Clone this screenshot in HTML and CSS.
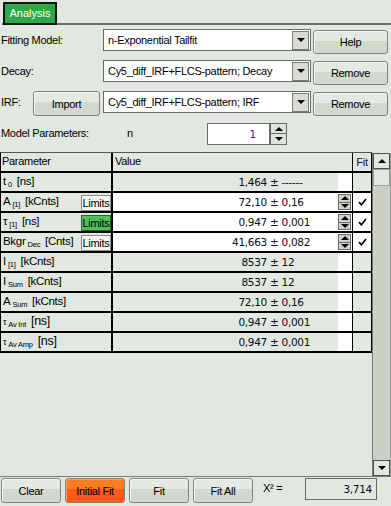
FILE: index.html
```html
<!DOCTYPE html>
<html lang="en">

<head>
    <meta charset="UTF-8">
    <meta name="viewport" content="width=device-width, initial-scale=1.0">
    <title>Analysis</title>
    <link rel="stylesheet" href="styles.css">
</head>

<body>
    <div class="tabs">
        <div class="tab">Analysis</div>
    </div>

    <div class="pane">
        <div class="form-row">
            <div class="lbl">Fitting Model:</div>
            <div class="combo"><span class="combo-text">n-Exponential Tailfit</span><span class="drop"></span></div>
            <button class="btn side-btn">Help</button>
        </div>
        <div class="form-row">
            <div class="lbl">Decay:</div>
            <div class="combo"><span class="combo-text">Cy5_diff_IRF+FLCS-pattern; Decay</span><span class="drop"></span></div>
            <button class="btn side-btn">Remove</button>
        </div>
        <div class="form-row">
            <div class="lbl lbl-short">IRF:</div>
            <button class="btn import-btn">Import</button>
            <div class="combo"><span class="combo-text">Cy5_diff_IRF+FLCS-pattern; IRF</span><span class="drop"></span></div>
            <button class="btn side-btn">Remove</button>
        </div>
        <div class="param-row">
            <div class="lbl lbl-model">Model Parameters:</div>
            <div class="n-lbl">n</div>
            <div class="spinbox">1</div>
            <div class="spin-arrows">
                <span class="arr"><i class="tri-up"></i></span>
                <span class="arr"><i class="tri-down"></i></span>
            </div>
        </div>
    </div>

    <div class="grid-area">
        <div class="ptable">
            <div class="prow head">
                <div class="c-param">Parameter</div>
                <div class="h-val">Value</div>
                <div class="c-fit h-fit">Fit</div>
            </div>

            <div class="prow">
                <div class="c-param"><span class="pname">t<sub>0</sub> [ns]</span></div>
                <div class="c-val"><span class="num">1,464</span><span class="err">&nbsp;± ------</span></div>
                <div class="c-spin"></div>
                <div class="c-fit"></div>
            </div>

            <div class="prow edit">
                <div class="c-param"><span class="pname">A<sub>[1]</sub> [kCnts]</span><button class="limits">Limits</button></div>
                <div class="c-val"><span class="num">72,10</span><span class="err">&nbsp;± 0,16</span></div>
                <div class="c-spin"><span class="sp"><i class="tri-up"></i></span><span class="sp"><i class="tri-down"></i></span></div>
                <div class="c-fit"><svg width="9" height="8" viewBox="0 0 9 8"><path d="M1 4.2 L3.4 6.8 L8 1" fill="none" stroke="#000" stroke-width="1.7"/></svg></div>
            </div>

            <div class="prow edit">
                <div class="c-param"><span class="pname">τ<sub>[1]</sub> [ns]</span><button class="limits on">Limits</button></div>
                <div class="c-val"><span class="num">0,947</span><span class="err">&nbsp;± 0,001</span></div>
                <div class="c-spin"><span class="sp"><i class="tri-up"></i></span><span class="sp"><i class="tri-down"></i></span></div>
                <div class="c-fit"><svg width="9" height="8" viewBox="0 0 9 8"><path d="M1 4.2 L3.4 6.8 L8 1" fill="none" stroke="#000" stroke-width="1.7"/></svg></div>
            </div>

            <div class="prow edit">
                <div class="c-param"><span class="pname">Bkgr<sub>Dec</sub> [Cnts]</span><button class="limits">Limits</button></div>
                <div class="c-val"><span class="num">41,663</span><span class="err">&nbsp;± 0,082</span></div>
                <div class="c-spin"><span class="sp"><i class="tri-up"></i></span><span class="sp"><i class="tri-down"></i></span></div>
                <div class="c-fit"><svg width="9" height="8" viewBox="0 0 9 8"><path d="M1 4.2 L3.4 6.8 L8 1" fill="none" stroke="#000" stroke-width="1.7"/></svg></div>
            </div>

            <div class="prow">
                <div class="c-param"><span class="pname">I<sub>[1]</sub> [kCnts]</span></div>
                <div class="c-val"><span class="num">8537</span><span class="err">&nbsp;± 12</span></div>
                <div class="c-spin"></div>
                <div class="c-fit"></div>
            </div>

            <div class="prow">
                <div class="c-param"><span class="pname">I<sub>Sum</sub> [kCnts]</span></div>
                <div class="c-val"><span class="num">8537</span><span class="err">&nbsp;± 12</span></div>
                <div class="c-spin"></div>
                <div class="c-fit"></div>
            </div>

            <div class="prow">
                <div class="c-param"><span class="pname">A<sub>Sum</sub> [kCnts]</span></div>
                <div class="c-val"><span class="num">72,10</span><span class="err">&nbsp;± 0,16</span></div>
                <div class="c-spin"></div>
                <div class="c-fit"></div>
            </div>

            <div class="prow">
                <div class="c-param"><span class="pname"><span class="small-tau">τ</span><sub>Av Int</sub> <span class="big">[ns]</span></span></div>
                <div class="c-val"><span class="num">0,947</span><span class="err">&nbsp;± 0,001</span></div>
                <div class="c-spin"></div>
                <div class="c-fit"></div>
            </div>

            <div class="prow">
                <div class="c-param"><span class="pname"><span class="small-tau">τ</span><sub>Av Amp</sub> <span class="big">[ns]</span></span></div>
                <div class="c-val"><span class="num">0,947</span><span class="err">&nbsp;± 0,001</span></div>
                <div class="c-spin"></div>
                <div class="c-fit"></div>
            </div>
        </div>

        <div class="scrollbar">
            <div class="sb-btn"><i class="tri-up"></i></div>
            <div class="sb-thumb"></div>
            <div class="sb-track"></div>
            <div class="sb-btn"><i class="tri-down"></i></div>
        </div>
    </div>

    <div class="bottom-bar">
        <button class="btn bb-btn">Clear</button>
        <button class="btn bb-btn orange">Initial Fit</button>
        <button class="btn bb-btn">Fit</button>
        <button class="btn bb-btn">Fit All</button>
        <span class="chi">X² =</span>
        <div class="chi-val">3,714</div>
    </div>
</body>

</html>
```

FILE: styles.css
```css
* {
    margin: 0;
    padding: 0;
    box-sizing: border-box;
}

body {
    width: 391px;
    height: 506px;
    overflow: hidden;
    background: #e0e8df;
    font-family: 'Liberation Sans', Arial, sans-serif;
    font-size: 11px;
    letter-spacing: -0.3px;
    color: #000;
}

/* tab strip */
.tabs {
    height: 25px;
    margin-left: 2px;
    padding: 2px 0 0 1px;
    border-bottom: 2px solid #6e6e6e;
}

.tab {
    width: 54px;
    height: 23px;
    background: #2ba84a;
    border: 2px solid #141414;
    color: #fff;
    font-size: 11px;
    letter-spacing: 0;
    line-height: 18px;
    text-align: center;
}

.pane {
    padding: 4px 0 0 1px;
}

.form-row {
    display: flex;
    align-items: flex-start;
    height: 25px;
    margin-bottom: 6px;
}

.lbl {
    width: 102px;
    line-height: 22px;
}

.lbl-short {
    width: 32px;
}

.lbl-model {
    width: 126px;
}

.combo {
    display: flex;
    align-items: center;
    width: 208px;
    height: 22px;
    background: #fff;
    border: 1px solid #6a6a6a;
    padding: 0 1px 0 4px;
}

.combo-text {
    flex: 1;
    white-space: nowrap;
    overflow: hidden;
}

.drop {
    width: 17px;
    height: 19px;
    border: 1px solid #7a7a7a;
    background: #d6ded4;
    display: flex;
    align-items: center;
    justify-content: center;
}

.drop::after {
    content: "";
    border-left: 4px solid transparent;
    border-right: 4px solid transparent;
    border-top: 4px solid #000;
}

.btn {
    font-family: inherit;
    font-size: 11px;
    letter-spacing: -0.3px;
    color: #000;
    border: 1px solid #828282;
    border-radius: 3px;
    background: linear-gradient(#e3eae1 0%, #e3eae1 45%, #d1d9cf 45%, #d1d9cf 100%);
    box-shadow: inset 1px 1px 0 #f6f9f4;
}

.side-btn {
    width: 75px;
    height: 24px;
    margin: 1px 0 0 2px;
}

.import-btn {
    width: 67px;
    height: 25px;
    margin-right: 3px;
}

.param-row {
    display: flex;
    align-items: flex-start;
    height: 24px;
    margin-bottom: 6px;
}

.n-lbl {
    width: 80px;
    line-height: 22px;
}

.spinbox {
    width: 63px;
    height: 22px;
    margin-top: 1px;
    background: #fff;
    border: 1px solid #6a6a6a;
    text-align: right;
    padding-right: 13px;
    line-height: 20px;
    font-family: 'DejaVu Sans', sans-serif;
    font-size: 10.5px;
    color: #5c1a5c;
}

.spin-arrows {
    display: flex;
    flex-direction: column;
    width: 17px;
    margin-top: 1px;
}

.arr {
    height: 11px;
    border: 1px solid #6a6a6a;
    background: #dde5db;
    display: flex;
    align-items: center;
    justify-content: center;
}

.arr + .arr {
    border-top: none;
}

.tri-up,
.tri-down {
    display: block;
    width: 0;
    height: 0;
    border-left: 4px solid transparent;
    border-right: 4px solid transparent;
}

.tri-up {
    border-bottom: 4px solid #000;
}

.tri-down {
    border-top: 4px solid #000;
}

/* parameter table */
.grid-area {
    display: flex;
    align-items: flex-start;
    height: 324px;
}

.ptable {
    width: 372px;
    border-top: 1px solid #555;
    border-left: 1px solid #000;
    border-right: 1px solid #000;
}

.prow {
    display: flex;
    height: 20px;
    border-bottom: 2px solid #000;
}

.c-param {
    display: flex;
    justify-content: space-between;
    width: 112px;
    padding-left: 2px;
    border-right: 2px solid #000;
    line-height: 17px;
    white-space: nowrap;
}

.head .c-param {
    padding-left: 1px;
}

.pname {
    font-size: 11.5px;
}

.pname sub {
    font-size: 7.5px;
    vertical-align: -2px;
    margin: 0 2px 0 2px;
    letter-spacing: -0.2px;
}

.small-tau {
    font-size: 9px;
}

.pname .big {
    font-size: 12.5px;
}

.limits {
    align-self: flex-end;
    width: 30px;
    height: 16px;
    border: 1px solid #8c8c8c;
    background: #f2f4ef;
    font-family: inherit;
    font-size: 11px;
    letter-spacing: -0.3px;
    line-height: 14px;
}

.limits.on {
    background: #4dbf5b;
    border-color: #2f5f36;
}

.c-val {
    display: flex;
    align-items: center;
    width: 225px;
    font-family: 'DejaVu Sans', sans-serif;
    font-size: 10.5px;
    letter-spacing: -0.3px;
    color: #0a0a20;
}

.num {
    width: 154px;
    text-align: right;
}

.err {
    white-space: pre;
}

.c-spin {
    display: flex;
    flex-direction: column;
    width: 15px;
    background: #fff;
    border-right: 1px solid #000;
}

.c-fit {
    display: flex;
    align-items: center;
    justify-content: center;
    width: 18px;
}

.edit .c-val,
.edit .c-fit {
    background: #fff;
}

.edit .c-spin {
    padding: 1px 1px 1px 0;
}

.sp {
    flex: 1;
    display: flex;
    align-items: center;
    justify-content: center;
    background: #cdd5cb;
    border: 1px solid #6a6a6a;
}

.sp + .sp {
    border-top: none;
}

.sp .tri-up,
.sp .tri-down {
    border-left-width: 4px;
    border-right-width: 4px;
}

.h-val {
    width: 240px;
    padding-left: 2px;
    border-right: 1px solid #000;
    line-height: 17px;
}

.h-fit {
    color: #10104a;
}

/* scrollbar */
.scrollbar {
    display: flex;
    flex-direction: column;
    width: 19px;
    height: 323px;
    margin-top: 1px;
    border-left: 1px solid #7a7a7a;
    border-right: 1px solid #9a9a9a;
}

.sb-btn {
    height: 16px;
    border: 1px solid #505050;
    background: #e0e8df;
    display: flex;
    align-items: center;
    justify-content: center;
}

.sb-thumb {
    height: 17px;
    border: 1px solid #9aa39a;
    background: #e0e8df;
}

.sb-track {
    flex: 1;
    background: #c9d1c7;
}

/* bottom bar */
.bottom-bar {
    display: flex;
    align-items: flex-start;
    gap: 4px;
    border-top: 1px solid #7a7a7a;
    padding: 1px 0 0 1px;
}

.bb-btn {
    width: 60px;
    height: 25px;
}

.bb-btn.orange {
    background: linear-gradient(#ff7d1e 0%, #ff7d1e 45%, #ff5a19 45%, #ff5a19 100%);
    box-shadow: inset 1px 1px 0 #ffa060;
}

.chi {
    width: 38px;
    margin-left: 6px;
    line-height: 20px;
}

.chi-val {
    width: 72px;
    height: 22px;
    border: 1px solid #6a6a6a;
    text-align: right;
    padding-right: 4px;
    line-height: 20px;
    font-family: 'DejaVu Sans', sans-serif;
    font-size: 10.5px;
    letter-spacing: -0.3px;
    color: #0a0a30;
}
```
